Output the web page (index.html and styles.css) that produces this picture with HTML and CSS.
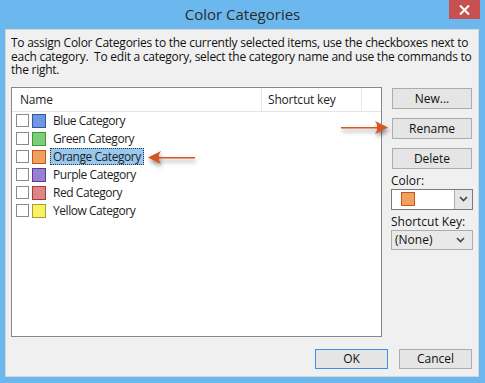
FILE: index.html
```html
<!DOCTYPE html>
<html>
<head>
<title>Color Categories</title>
<link rel="stylesheet" href="styles.css">
</head>
<body>
<div class="dlg">
  <div class="titlebar">
    <span class="title">Color Categories</span>
    <div class="close">
      <svg width="11" height="10" viewBox="0 0 11 10"><path d="M1 0.5 L10 9.5 M10 0.5 L1 9.5" stroke="#fff" stroke-width="2"/></svg>
    </div>
  </div>
  <div class="client">
    <p class="intro">To assign Color Categories to the currently selected items, use the checkboxes next to each category.&nbsp; To edit a category, select the category name and use the commands to the right.</p>
    <div class="main">
      <div class="listbox">
        <div class="list-head">
          <div class="col-name">Name</div>
          <div class="col-key">Shortcut key</div>
          <div class="col-rest"></div>
        </div>
        <div class="row"><span class="chk"></span><span class="sw blue"></span><span class="lbl">Blue Category</span></div>
        <div class="row"><span class="chk"></span><span class="sw green"></span><span class="lbl">Green Category</span></div>
        <div class="row"><span class="chk"></span><span class="sw orange"></span><span class="lbl sel">Orange Category</span></div>
        <div class="row"><span class="chk"></span><span class="sw purple"></span><span class="lbl">Purple Category</span></div>
        <div class="row"><span class="chk"></span><span class="sw red"></span><span class="lbl">Red Category</span></div>
        <div class="row"><span class="chk"></span><span class="sw yellow"></span><span class="lbl">Yellow Category</span></div>
      </div>
      <div class="side">
        <button class="btn">New...</button>
        <button class="btn">Rename</button>
        <button class="btn">Delete</button>
        <label class="fld">Color:</label>
        <div class="combo">
          <span class="sw orange"></span>
          <span class="drop"><svg width="9" height="6" viewBox="0 0 9 6"><path d="M1 1 L4.5 4.5 L8 1" fill="none" stroke="#444" stroke-width="1.6"/></svg></span>
        </div>
        <label class="fld">Shortcut Key:</label>
        <div class="select">
          <span>(None)</span>
          <svg width="9" height="6" viewBox="0 0 9 6"><path d="M1 1 L4.5 4.5 L8 1" fill="none" stroke="#444" stroke-width="1.6"/></svg>
        </div>
      </div>
    </div>
    <div class="footer">
      <button class="btn ok">OK</button>
      <button class="btn">Cancel</button>
    </div>
  </div>
  <svg class="arrow arrow-left" width="52" height="20" viewBox="0 0 52 20">
    <path d="M48 9 L12 9 L12 6.5 L14 3 L1 9.5 L14 16 L12 12.5 L12 10.5 L48 10.5 Z" fill="#d9541f"/>
  </svg>
  <svg class="arrow arrow-right" width="52" height="20" viewBox="0 0 52 20">
    <path d="M2 9 L38 9 L38 6.5 L36 3 L49 9.5 L36 16 L38 12.5 L38 10.5 L2 10.5 Z" fill="#d9541f"/>
  </svg>
</div>
</body>
</html>
```

FILE: styles.css
```css
* {
  box-sizing: border-box;
}
body {
  margin: 0;
  background: #6bb8ef;
  font-family: "Open Sans", "Noto Sans", sans-serif;
  font-size: 12px;
  color: #000;
}
.dlg {
  position: relative;
  width: 485px;
  height: 383px;
}
.titlebar {
  height: 29px;
  display: flex;
  justify-content: center;
  align-items: center;
}
.title {
  font-size: 15px;
  color: #2b2b2b;
  margin-top: -2px;
}
.close {
  position: absolute;
  top: 0;
  left: 449px;
  width: 31px;
  height: 19px;
  background: #c75050;
  display: flex;
  align-items: center;
  justify-content: center;
}
.client {
  margin: 0 6px 0 5px;
  height: 348px;
  background: #f0f0f0;
  border: 1px solid #d6d6d6;
  padding: 6px 5px 0 5px;
}
.intro {
  margin: 0;
  line-height: 13.5px;
  letter-spacing: -0.25px;
  color: #111;
}
.main {
  display: flex;
  gap: 9px;
  margin-top: 10px;
}
.listbox {
  width: 371px;
  height: 250px;
  background: #fff;
  border: 1px solid #828790;
}
.list-head {
  display: flex;
  height: 24px;
  border-bottom: 1px solid #e5e5e5;
  align-items: stretch;
}
.list-head div {
  display: flex;
  align-items: center;
  color: #1e1e1e;
  letter-spacing: -0.2px;
}
.col-name {
  width: 250px;
  padding-left: 8px;
  border-right: 1px solid #e3e8f0;
}
.col-key {
  width: 100px;
  padding-left: 6px;
  border-right: 1px solid #e3e8f0;
}
.row {
  height: 18px;
  display: flex;
  align-items: center;
  padding-left: 4px;
}
.chk {
  width: 13px;
  height: 13px;
  border: 1px solid #8a8a8a;
  background: #fff;
  margin-right: 3px;
}
.sw {
  width: 14px;
  height: 14px;
  border: 1px solid;
  margin-right: 4px;
}
.blue { background: #6f96e0; border-color: #2d55a8; }
.green { background: #7ccf78; border-color: #3b9a35; }
.orange { background: #f0a060; border-color: #c0581a; }
.purple { background: #9a80d2; border-color: #553a99; }
.red { background: #de8585; border-color: #a63a3a; }
.yellow { background: #f8f264; border-color: #a89e2a; }
.lbl {
  color: #1e1e1e;
  padding: 0 2px;
  height: 17px;
  line-height: 16px;
  letter-spacing: -0.45px;
  align-self: flex-start;
  border: 1px solid transparent;
}
.sel {
  background: #99c9ef;
  border: 1px dotted #333;
}
.side {
  width: 82px;
  display: flex;
  flex-direction: column;
  padding-top: 1px;
}
.btn {
  font-family: inherit;
  font-size: 12px;
  color: #111;
  height: 21px;
  width: 80px;
  margin: 0 0 9px 1px;
  padding: 0;
  background: #e5e5e5;
  border: 1px solid #acacac;
}
.fld {
  margin-top: -5px;
  height: 16px;
  line-height: 16px;
  color: #111;
}
.combo {
  height: 21px;
  border: 1px solid #7a7a7a;
  background: #fff;
  display: flex;
  align-items: center;
  padding-left: 9px;
}
.combo .sw {
  margin: 0;
  width: 14px;
  height: 14px;
}
.drop {
  margin-left: auto;
  width: 18px;
  height: 19px;
  background: #e6e6e6;
  border-left: 1px solid #acacac;
  display: flex;
  align-items: center;
  justify-content: center;
}
.select {
  height: 20px;
  border: 1px solid #acacac;
  background: #e9e9e9;
  display: flex;
  align-items: center;
  justify-content: space-between;
  padding: 0 7px 0 3px;
  color: #111;
}
.side .combo + .fld {
  margin-top: 4px;
}
.footer {
  display: flex;
  justify-content: flex-end;
  gap: 11px;
  margin-top: 12px;
  padding-right: 1px;
}
.footer .btn {
  width: 73px;
  height: 20px;
  margin: 0;
}
.ok {
  border-color: #3c91e6;
}
.arrow {
  position: absolute;
  filter: drop-shadow(1px 3px 2px rgba(0, 0, 0, 0.45));
}
.arrow-left {
  left: 147px;
  top: 148px;
}
.arrow-right {
  left: 339px;
  top: 118px;
}
```
